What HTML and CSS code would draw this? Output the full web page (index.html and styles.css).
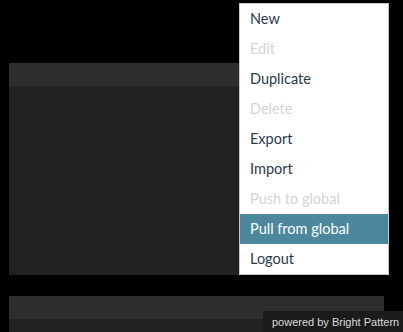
FILE: index.html
```html
<!DOCTYPE html>
<html lang="en">
<head>
  <meta charset="UTF-8">
  <title>Menu</title>
  <link rel="stylesheet" href="styles.css">
</head>
<body>
  <div class="page">
    <div class="panel panel-top">
      <div class="panel-head"></div>
      <div class="panel-body"></div>
    </div>
    <div class="panel panel-bottom">
      <div class="panel-head"></div>
      <div class="panel-body"></div>
    </div>
  </div>

  <ul class="menu">
    <li>New</li>
    <li class="disabled">Edit</li>
    <li>Duplicate</li>
    <li class="disabled">Delete</li>
    <li>Export</li>
    <li>Import</li>
    <li class="disabled">Push to global</li>
    <li class="active">Pull from global</li>
    <li>Logout</li>
  </ul>

  <div class="powered">powered by Bright Pattern</div>
</body>
</html>
```

FILE: styles.css
```css
html, body {
  margin: 0;
  height: 100%;
  overflow: hidden;
  background: #000;
}
.page {
  padding: 63px 19px 0 9px;
}
.panel-head {
  height: 23px;
  background: #2e2e2e;
}
.panel-body {
  background: #222;
}
.panel-top .panel-body {
  height: 189px;
}
.panel-bottom {
  margin-top: 21px;
}
.panel-bottom .panel-body {
  height: 13px;
}
.menu {
  position: absolute;
  top: 3px;
  left: 239px;
  width: 148px;
  margin: 0;
  padding: 0;
  list-style: none;
  background: #fff;
  border: 1px solid #c8c8c8;
  font-family: Lato, sans-serif;
  font-size: 14.5px;
}
.menu li {
  height: 30px;
  line-height: 30px;
  padding-left: 10px;
  color: #2b3a4b;
}
.menu li.disabled {
  color: #d4d4d4;
}
.menu li.active {
  background: #4c879d;
  color: #fff;
}
.powered {
  position: absolute;
  left: 263px;
  right: 0;
  bottom: 0;
  height: 21px;
  line-height: 22px;
  padding-left: 9px;
  white-space: nowrap;
  background: #1b1b1b;
  color: #dcdcdc;
  font-family: "Liberation Sans", Arial, sans-serif;
  font-size: 11px;
}
```
